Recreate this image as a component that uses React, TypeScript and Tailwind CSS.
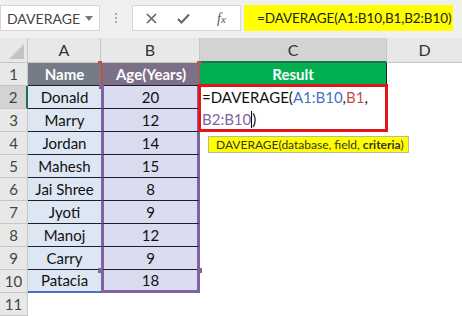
import React from 'react'

const rows: [string, number][] = [
  ['Donald', 20],
  ['Marry', 12],
  ['Jordan', 14],
  ['Mahesh', 15],
  ['Jai Shree', 8],
  ['Jyoti', 9],
  ['Manoj', 12],
  ['Carry', 9],
  ['Patacia', 18],
]

const RowNum = ({ n, active }: { n: number; active?: boolean }) => (
  <div
    className={`flex h-full w-[28px] shrink-0 items-center justify-center border-b border-r border-[#c6c6c6] text-[15px] text-[#444] ${
      active ? 'border-r-2 border-r-[#217346] bg-[#d3d3d3]' : 'bg-[#e8e8e8]'
    }`}
  >
    {n}
  </div>
)

const Handle = ({ className }: { className: string }) => (
  <div className={`absolute h-[5px] w-[5px] bg-[#8064a2] ${className}`} />
)

export default function App() {
  return (
    <div className="relative h-[316px] w-[462px] overflow-hidden bg-white font-['Lato','Liberation_Sans',sans-serif]">
      {/* formula bar */}
      <div className="flex h-[38px] items-start bg-[#f0f0f0] pt-[5px]">
        <div className="flex h-[26px] w-[100px] items-center justify-between border border-[#d6d6d6] bg-white pl-[6px] pr-[6px] text-[14px] text-[#444]">
          <span>DAVERAGE</span>
          <svg width="8" height="5" viewBox="0 0 8 5">
            <path d="M0 0h8L4 5z" fill="#777" />
          </svg>
        </div>
        <div className="flex h-[26px] w-[32px] flex-col items-center justify-center gap-[2px]">
          <div className="h-[2px] w-[2px] bg-[#aaa]" />
          <div className="h-[2px] w-[2px] bg-[#aaa]" />
          <div className="h-[2px] w-[2px] bg-[#aaa]" />
        </div>
        <div className="flex h-[26px] w-[109px] items-center border border-[#d6d6d6] bg-white">
          <svg className="ml-[13px]" width="11" height="11" viewBox="0 0 11 11">
            <path d="M1 1l9 9M10 1l-9 9" stroke="#666" strokeWidth="1.6" />
          </svg>
          <svg className="ml-[20px]" width="13" height="11" viewBox="0 0 13 11">
            <path d="M1 6l3.5 3.5L12 1.5" stroke="#666" strokeWidth="2" fill="none" />
          </svg>
          <span className="ml-[27px] font-['Liberation_Serif',serif] text-[14px] italic text-[#555]">
            f<span className="text-[11px]">x</span>
          </span>
        </div>
        <div className="ml-[3px] flex h-[26px] w-[209px] items-center bg-[#ffff00] pl-[13px] text-[13.5px] tracking-[-0.1px] text-[#222]">
          <span>=DAVERAGE(A1:B10,B1,B2:B10)</span>
        </div>
      </div>

      {/* column headers */}
      <div className="flex h-[25px] text-[16px] text-[#333]">
        <div className="relative w-[28px] shrink-0 border-b border-r border-[#c6c6c6] bg-[#e8e8e8]">
          <svg className="absolute bottom-[3px] right-[3px]" width="15" height="15" viewBox="0 0 15 15">
            <path d="M15 0v15H0z" fill="#c4c4c4" />
          </svg>
        </div>
        <div className="flex w-[73px] shrink-0 items-center justify-center border-b border-r border-[#c6c6c6] bg-[#e8e8e8]">A</div>
        <div className="flex w-[99px] shrink-0 items-center justify-center border-b border-r border-[#c6c6c6] bg-[#e8e8e8]">B</div>
        <div className="flex w-[187px] shrink-0 items-center justify-center border-b-2 border-r border-[#c6c6c6] border-b-[#217346] bg-[#d3d3d3]">C</div>
        <div className="flex flex-1 items-center justify-center border-b border-[#c6c6c6] bg-[#e8e8e8]">D</div>
      </div>

      {/* grid */}
      <div className="relative">
        <div className="flex h-[23px]">
          <RowNum n={1} />
          <div className="flex w-[73px] shrink-0 items-center justify-center border-b border-[#1d1d2b] bg-[#767b88] text-[15px] font-bold text-white">
            Name
          </div>
          <div className="flex w-[99px] shrink-0 items-center justify-center border-b border-l-2 border-r border-[#1d1d2b] border-l-[#c0504d] border-r-[#c0504d] bg-[#7b7087] text-[15px] font-bold text-white">
            Age(Years)
          </div>
          <div className="flex w-[187px] shrink-0 items-center justify-center border-r border-[#1d1d2b] bg-[#00b050] text-[15px] font-bold text-white">
            Result
          </div>
          <div className="flex-1" />
        </div>
        {rows.map(([name, age], i) => (
          <div key={name} className="flex h-[23px]">
            <RowNum n={i + 2} active={i === 0} />
            <div
              className={`flex w-[73px] shrink-0 items-center justify-center border-[#1d1d2b] bg-[#dde6f3] text-[15px] text-[#111] ${
                i === rows.length - 1 ? 'border-b-2 border-b-[#4472c4]' : 'border-b'
              }`}
            >
              {name}
            </div>
            <div
              className={`flex w-[99px] shrink-0 items-center justify-center border-x-[3px] border-[#1d1d2b] border-x-[#8064a2] bg-[#dcdcf0] text-[15px] text-[#111] ${
                i === rows.length - 1 ? 'border-b-[3px] border-b-[#8064a2]' : 'border-b'
              }`}
            >
              {age}
            </div>
            <div className="w-[187px] shrink-0" />
            <div className="flex-1" />
          </div>
        ))}
        <div className="flex h-[23px]">
          <RowNum n={11} />
        </div>

        <Handle className="left-[99px] top-[21px]" />
        <Handle className="left-[98px] top-[205px]" />
        <Handle className="left-[197px] top-[205px]" />
        <Handle className="left-[98px] top-[-2px] !bg-[#c0504d] !h-[4px] !w-[4px]" />
        <Handle className="left-[197px] top-[-2px] !bg-[#c0504d] !h-[4px] !w-[4px]" />

        {/* in-cell editor with red annotation box */}
        <div className="absolute left-[198px] top-[21px] h-[48px] w-[190px] border-[3px] border-[#e0161b] bg-white pl-[1px] text-[15px] leading-[21px] text-[#111]">
          <div>
            =DAVERAGE(<span className="text-[#4472c4]">A1:B10</span>,<span className="text-[#c0504d]">B1</span>,
          </div>
          <div>
            <span className="text-[#8064a2]">B2:B10</span>
            <span className="inline-block h-[17px] w-px translate-y-[3px] bg-black" />)
          </div>
        </div>

        {/* function tooltip */}
        <div className="absolute left-[208px] top-[73px] flex h-[17px] w-[201px] items-center border border-[#b8b8a0] bg-[#ffff00] pl-[7px] text-[12px] text-[#333]">
          <span>
            DAVERAGE(database, field, <span className="font-bold">criteria</span>)
          </span>
        </div>
      </div>
    </div>
  )
}
